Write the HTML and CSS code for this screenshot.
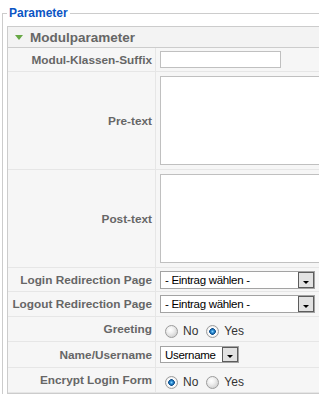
FILE: index.html
```html
<!DOCTYPE html>
<html lang="de">

<head>
    <meta charset="UTF-8">
    <meta name="viewport" content="width=device-width, initial-scale=1.0">
    <title>Parameter</title>
    <link rel="stylesheet" href="styles.css">
</head>

<body>
    <fieldset class="params">
        <legend>Parameter</legend>
        <div class="pane">
            <h3 class="pane-title"><span class="toggler"></span>Modulparameter</h3>
            <div class="paramlist">
                <div class="param row-s">
                    <label class="param-key">Modul-Klassen-Suffix</label>
                    <div class="param-value"><input type="text" class="text"></div>
                </div>
                <div class="param row-area">
                    <label class="param-key">Pre-text</label>
                    <div class="param-value"><textarea></textarea></div>
                </div>
                <div class="param row-area">
                    <label class="param-key">Post-text</label>
                    <div class="param-value"><textarea></textarea></div>
                </div>
                <div class="param row-s">
                    <label class="param-key">Login Redirection Page</label>
                    <div class="param-value">
                        <div class="select">
                            <select><option>- Eintrag wählen -</option></select>
                            <span class="select-btn"></span>
                        </div>
                    </div>
                </div>
                <div class="param">
                    <label class="param-key">Logout Redirection Page</label>
                    <div class="param-value">
                        <div class="select">
                            <select><option>- Eintrag wählen -</option></select>
                            <span class="select-btn"></span>
                        </div>
                    </div>
                </div>
                <div class="param">
                    <label class="param-key">Greeting</label>
                    <div class="param-value radios">
                        <input type="radio" name="greeting" class="radio" id="greet0">
                        <label for="greet0">No</label>
                        <input type="radio" name="greeting" class="radio" id="greet1" checked>
                        <label for="greet1">Yes</label>
                    </div>
                </div>
                <div class="param row-l">
                    <label class="param-key">Name/Username</label>
                    <div class="param-value">
                        <div class="select select-small">
                            <select><option>Username</option></select>
                            <span class="select-btn"></span>
                        </div>
                    </div>
                </div>
                <div class="param">
                    <label class="param-key">Encrypt Login Form</label>
                    <div class="param-value radios">
                        <input type="radio" name="encrypt" class="radio" id="enc0" checked>
                        <label for="enc0">No</label>
                        <input type="radio" name="encrypt" class="radio" id="enc1">
                        <label for="enc1">Yes</label>
                    </div>
                </div>
            </div>
        </div>
    </fieldset>
</body>

</html>
```

FILE: styles.css
```css
* {
    box-sizing: border-box;
}

html,
body {
    margin: 0;
    overflow: hidden;
    background: #fff;
    font-family: "Liberation Sans", Arial, Helvetica, sans-serif;
    font-size: 11px;
}

.params {
    width: 420px;
    margin: 0 0 0 2px;
    padding: 0 0 0 4px;
    border: 1px solid #ccc;

    legend {
        padding: 0 2px;
        line-height: 26px;
        font-size: 12px;
        font-weight: bold;
        color: #0b55c4;
    }
}

.pane {
    border: 1px solid #ccc;
    background: #f6f6f6;
}

.pane-title {
    margin: 0;
    height: 21px;
    padding-left: 7px;
    display: flex;
    align-items: center;
    gap: 7px;
    background: #f3f3f3;
    border-bottom: 1px solid #ccc;
    font-size: 13.5px;
    font-weight: bold;
    color: #666;
}

.toggler {
    width: 0;
    height: 0;
    border-left: 4px solid transparent;
    border-right: 4px solid transparent;
    border-top: 5px solid #67a845;
    margin-top: 1px;
}

.param {
    display: flex;
    height: 25px;
    border-bottom: 1px solid #e6e6e6;
}

.row-s {
    height: 24px;
}

.row-l {
    height: 26px;
}

.row-area {
    height: 98px;
}

.param-key {
    width: 148px;
    flex: none;
    padding-right: 3px;
    display: flex;
    align-items: center;
    justify-content: flex-end;
    border-right: 1px solid #e6e6e6;
    font-size: 11.8px;
    font-weight: bold;
    color: #666;
    text-align: right;
}

.param-value {
    flex: 1;
    padding-left: 4px;
    display: flex;
    align-items: center;
}

.text {
    width: 121px;
    height: 17px;
    margin: 0;
    padding: 0 2px;
    border: 1px solid #c0c0c0;
    background: #fff;
}

textarea {
    width: 260px;
    height: 89px;
    margin: 0;
    border: 1px solid #c0c0c0;
    background: #fff;
    resize: none;
}

.select {
    width: 155px;
    height: 18px;
    display: flex;
    border: 1px solid #a3a3a3;
    background: #fff;

    select {
        flex: 1;
        min-width: 0;
        appearance: none;
        border: 0;
        margin: 0;
        padding: 0 0 0 4px;
        background: transparent;
        font-family: "Liberation Sans", Arial, sans-serif;
        font-size: 11.5px;
        letter-spacing: -0.3px;
        color: #000;
    }
}

.select-small {
    width: 79px;
    height: 17px;
}

.select-btn {
    width: 16px;
    flex: none;
    display: flex;
    align-items: flex-end;
    justify-content: center;
    padding-bottom: 3px;
    border: 1px solid #5c5c5c;
    background: #e2e2e2;

    &::after {
        content: "";
        border-left: 3.5px solid transparent;
        border-right: 3.5px solid transparent;
        border-top: 3px solid #000;
    }
}

.radios {
    padding-top: 4px;
    padding-left: 9px;
    font-size: 12px;
    color: #333;

    label {
        margin: 0 8px 0 5px;
    }
}

.radio {
    appearance: none;
    width: 13px;
    height: 13px;
    margin: 0;
    border-radius: 50%;
    border: 1px solid #9c9c9c;
    background: radial-gradient(circle at 40% 35%, #fff 0, #f2f2f2 3px, #d6d6d6 7px);

    &:checked {
        background: radial-gradient(circle at 50% 50%, #8ad6ff 0, #2b8bd2 1.5px, #0d4d8a 3px, #fff 3.6px, #e2e2e2 6.5px);
    }
}
```
